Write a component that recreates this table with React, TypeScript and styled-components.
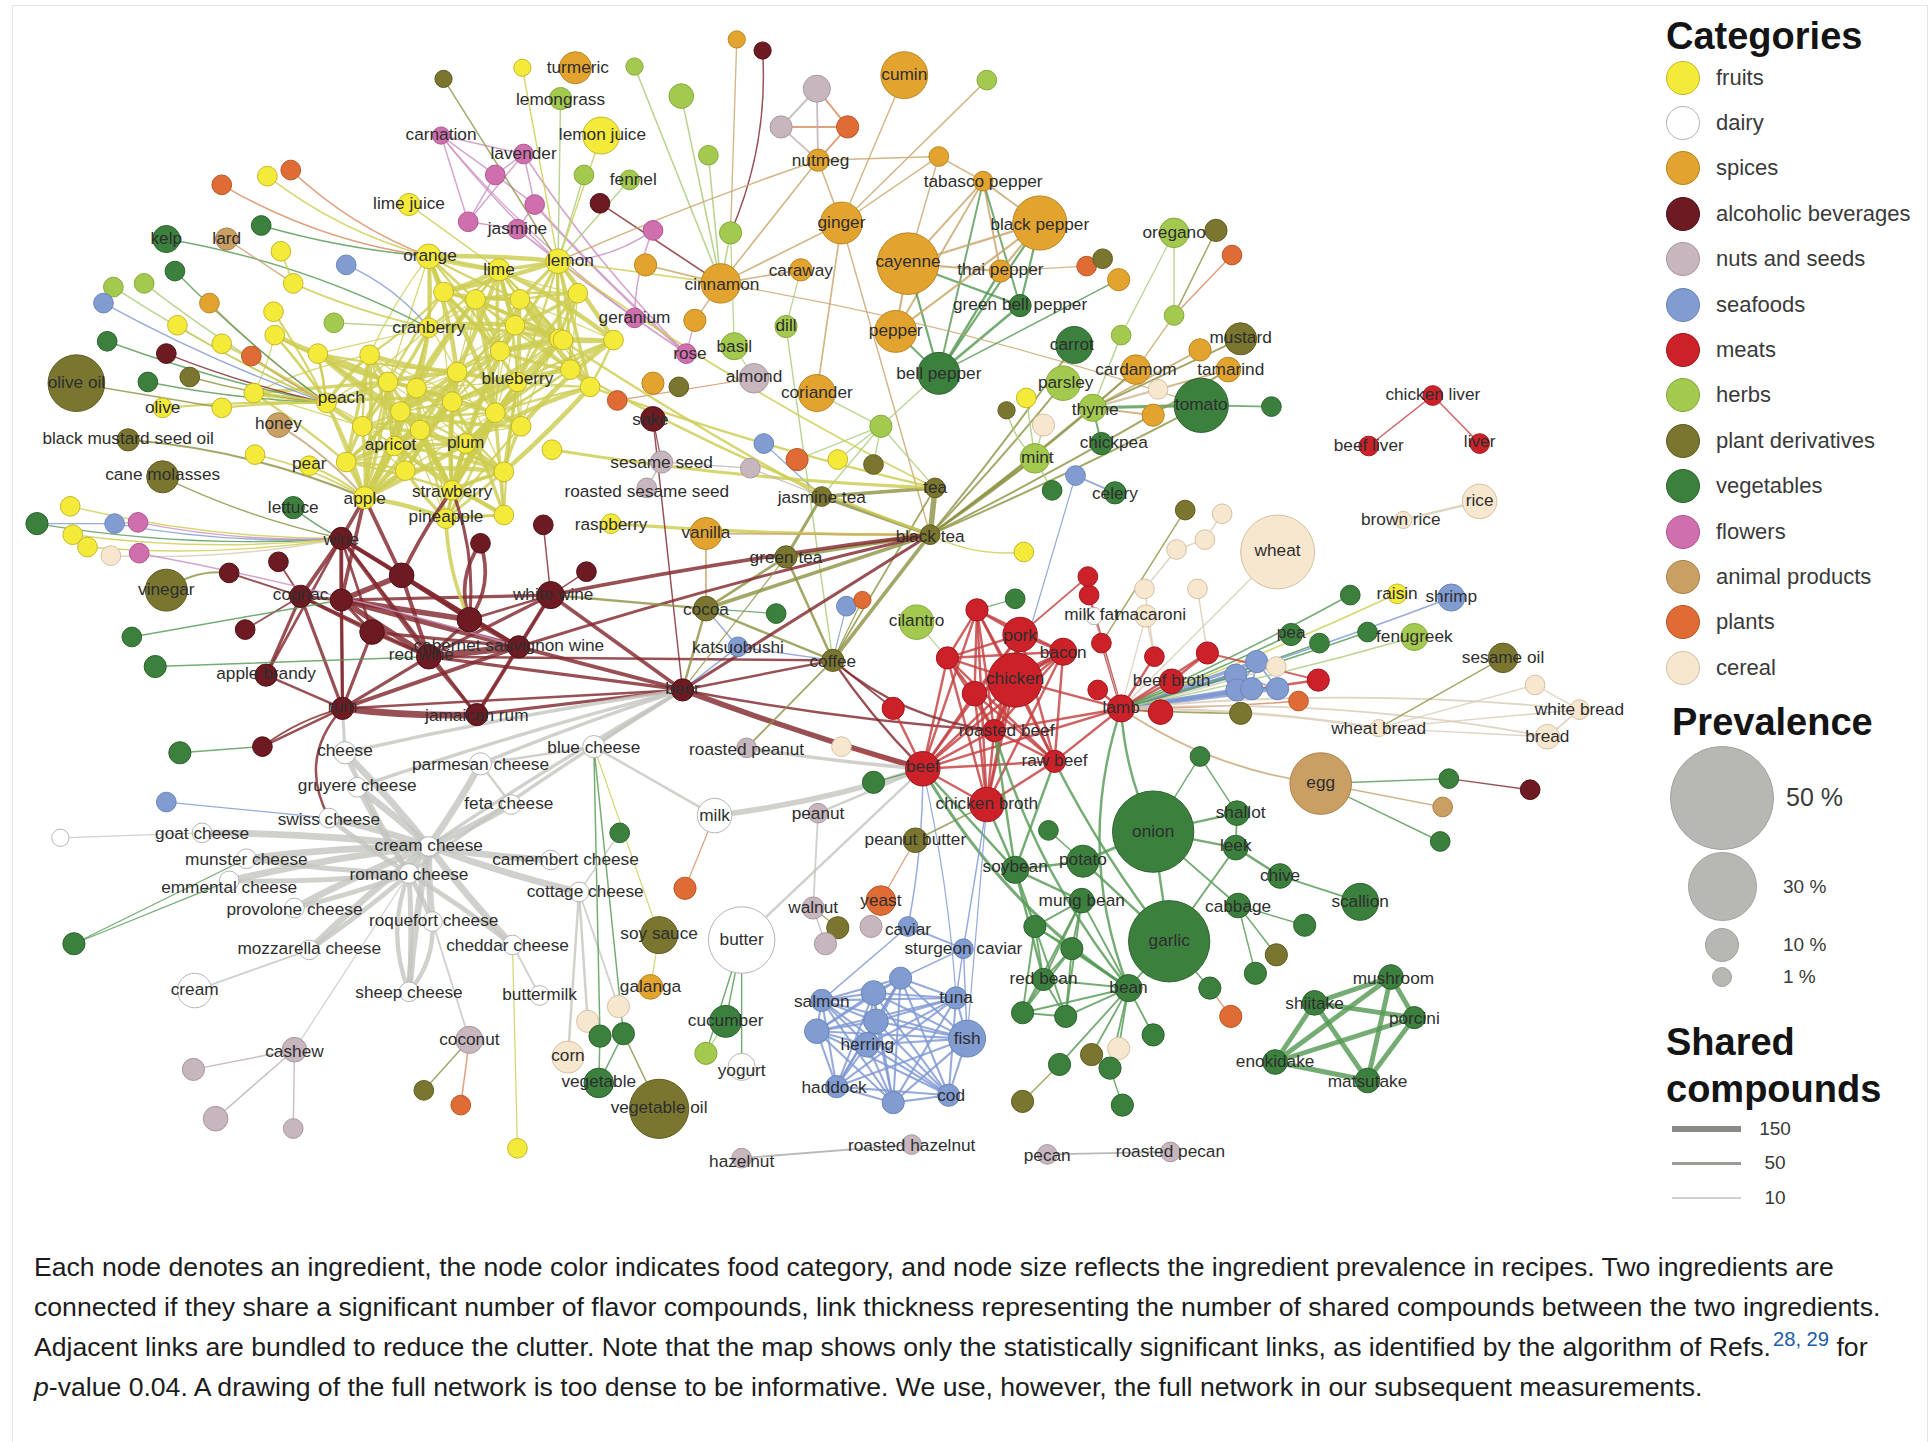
import React from "react";
import styled, { createGlobalStyle } from "styled-components";

const GlobalStyle = createGlobalStyle`
  html, body { margin: 0; padding: 0; background: #ffffff; }
  body { font-family: "Liberation Sans", Arial, Helvetica, sans-serif; }
`;

type Cat = "F" | "D" | "S" | "A" | "N" | "SF" | "M" | "H" | "P" | "V" | "FL" | "AP" | "PL" | "C";

const CATS: Record<Cat, { name: string; fill: string; stroke: string; edge: string }> = {
  F: { name: "fruits", fill: "#f4ea3a", stroke: "#c4b52c", edge: "#cdcd52" },
  D: { name: "dairy", fill: "#ffffff", stroke: "#b4b4b4", edge: "#c6c6c1" },
  S: { name: "spices", fill: "#e3a42f", stroke: "#b88420", edge: "#c9a66c" },
  A: { name: "alcoholic beverages", fill: "#6d1a22", stroke: "#4f1016", edge: "#832a30" },
  N: { name: "nuts and seeds", fill: "#c7b6be", stroke: "#a8969e", edge: "#bdb0b6" },
  SF: { name: "seafoods", fill: "#819cd1", stroke: "#6a84b8", edge: "#7f98d3" },
  M: { name: "meats", fill: "#cc2129", stroke: "#a0161c", edge: "#c4403f" },
  H: { name: "herbs", fill: "#a3ca4e", stroke: "#84a83a", edge: "#a9cc7a" },
  P: { name: "plant derivatives", fill: "#7a7630", stroke: "#5e5a22", edge: "#8f9445" },
  V: { name: "vegetables", fill: "#3c803e", stroke: "#2c622e", edge: "#569a55" },
  FL: { name: "flowers", fill: "#d06fae", stroke: "#b0558e", edge: "#cc90c2" },
  AP: { name: "animal products", fill: "#c99f64", stroke: "#a88048", edge: "#c8a474" },
  PL: { name: "plants", fill: "#df6b35", stroke: "#bb5526", edge: "#d98a60" },
  C: { name: "cereal", fill: "#f8e7cf", stroke: "#d2bfa4", edge: "#d9cbb6" },
};

const LEGEND_ORDER: Cat[] = ["F", "D", "S", "A", "N", "SF", "M", "H", "P", "V", "FL", "AP", "PL", "C"];

// id, x, y, r, category, label, label dx, label dy  (coordinates in the figure's own units)
type NodeT = [string, number, number, number, Cat, string?, number?, number?];

const NODES: NodeT[] = [
  // top left: fruits, flowers
  ["turmeric", 467, 55, 13, "S", "turmeric", 2, 4],
  ["y1", 424, 55, 7, "F"],
  ["p1", 360, 64, 7, "P"],
  ["h1", 515, 54, 7, "H"],
  ["lemongrass", 455, 80, 9, "H", "lemongrass", 0, 5],
  ["lemonjuice", 488, 110, 15, "F", "lemon juice", 1, 4],
  ["carnation", 358, 110, 7, "FL", "carnation", 0, 4],
  ["lavender", 425, 125, 8, "FL", "lavender", 0, 4],
  ["fl1", 402, 142, 8, "FL"],
  ["fl2", 434, 166, 8, "FL"],
  ["fl3", 380, 180, 8, "FL"],
  ["jasmine", 420, 186, 8, "FL", "jasmine", 0, 4],
  ["h2", 474, 142, 8, "H"],
  ["fennel", 511, 146, 8, "H", "fennel", 3, 4],
  ["a1", 487, 165, 8, "A"],
  ["pl1", 180, 150, 8, "PL"],
  ["y2", 217, 143, 8, "F"],
  ["pl2", 236, 138, 8, "PL"],
  ["limejuice", 332, 166, 9, "F", "lime juice", 0, 4],
  ["v1", 212, 183, 8, "V"],
  ["kelp", 135, 194, 11, "V", "kelp", 0, 4],
  ["lard", 184, 194, 9, "AP", "lard", 0, 4],
  ["y3", 228, 204, 8, "F"],
  ["sf1", 281, 215, 8, "SF"],
  ["orange", 348, 208, 10, "F", "orange", 1, 4],
  ["lime", 405, 219, 9, "F", "lime", 0, 4],
  ["lemon", 453, 212, 10, "F", "lemon", 10, 4],
  ["v2", 142, 220, 8, "V"],
  ["h3", 92, 233, 8, "H"],
  ["h4", 117, 230, 8, "H"],
  ["sf2", 84, 246, 8, "SF"],
  ["s1", 170, 246, 8, "S"],
  ["y4", 238, 230, 8, "F"],
  ["y5", 222, 253, 8, "F"],
  ["y6", 144, 264, 8, "F"],
  ["h5", 271, 262, 8, "H"],
  ["cranberry", 348, 266, 8, "F", "cranberry", 0, 4],
  ["y7", 360, 237, 8, "F"],
  ["y8", 386, 243, 8, "F"],
  ["y9", 422, 243, 8, "F"],
  ["y10", 418, 264, 8, "F"],
  ["y11", 454, 275, 8, "F"],
  ["v3", 87, 277, 8, "V"],
  ["y12", 223, 272, 8, "F"],
  ["y13", 180, 279, 8, "F"],
  ["pl3", 204, 289, 8, "PL"],
  ["y14", 258, 287, 8, "F"],
  ["y15", 300, 288, 8, "F"],
  ["y16", 406, 285, 8, "F"],
  ["a2", 135, 287, 8, "A"],
  ["y17", 371, 302, 8, "F"],
  ["y18", 315, 310, 8, "F"],
  ["y19", 338, 315, 8, "F"],
  ["oliveoil", 62, 311, 23, "P", "olive oil", 0, 4],
  ["v4", 120, 310, 8, "V"],
  ["p2", 154, 306, 8, "P"],
  ["y20", 206, 319, 8, "F"],
  ["peach", 265, 327, 8, "F", "peach", 12, 0],
  ["blueberry", 420, 310, 8, "F", "blueberry", 0, 2],
  ["y21", 367, 326, 8, "F"],
  ["olive", 132, 331, 8, "F", "olive", 0, 4],
  ["y22", 180, 331, 8, "F"],
  ["y23", 325, 334, 8, "F"],
  ["y24", 402, 335, 8, "F"],
  ["honey", 226, 345, 10, "AP", "honey", 0, 3],
  ["bmso", 104, 357, 9, "P", "black mustard seed oil", 0, 3],
  ["apricot", 320, 362, 8, "F", "apricot", -3, 3],
  ["plum", 378, 360, 8, "F", "plum", 0, 4],
  ["y25", 207, 369, 8, "F"],
  ["pear", 251, 378, 8, "F", "pear", 0, 3],
  ["y26", 281, 375, 8, "F"],
  ["y27", 329, 382, 8, "F"],
  ["y28", 409, 383, 8, "F"],
  ["y29", 341, 349, 8, "F"],
  ["y30", 294, 346, 8, "F"],
  ["y31", 423, 346, 8, "F"],
  ["canemol", 132, 387, 13, "P", "cane molasses", 0, 3],
  ["apple", 296, 404, 9, "F", "apple", 0, 5],
  ["strawberry", 367, 398, 8, "F", "strawberry", 0, 5],
  ["lettuce", 238, 412, 9, "V", "lettuce", 0, 4],
  ["pineapple", 362, 421, 8, "F", "pineapple", 0, 3],
  ["y32", 409, 418, 8, "F"],
  ["a3", 441, 426, 8, "A"],
  ["y33", 57, 411, 8, "F"],
  ["v5", 30, 425, 9, "V"],
  ["sf3", 93, 425, 8, "SF"],
  ["fl4", 112, 424, 8, "FL"],
  ["y34", 59, 434, 8, "F"],
  ["y35", 71, 444, 8, "F"],
  ["c1", 90, 451, 8, "C"],
  ["fl5", 113, 449, 8, "FL"],
  // alcoholic beverages
  ["wine", 277, 437, 9, "A", "wine", 0, 5],
  ["a4", 390, 441, 8, "A"],
  ["a5", 226, 456, 8, "A"],
  ["a6", 326, 467, 10, "A"],
  ["a7", 186, 465, 8, "A"],
  ["vinegar", 135, 479, 17, "P", "vinegar", 0, 4],
  ["cognac", 244, 484, 9, "A", "cognac", 0, 3],
  ["a8", 277, 487, 9, "A"],
  ["whitewine", 447, 483, 11, "A", "white wine", 2, 4],
  ["a9", 199, 511, 8, "A"],
  ["a10", 302, 513, 10, "A"],
  ["a11", 381, 503, 10, "A"],
  ["v6", 107, 517, 8, "V"],
  ["redwine", 348, 533, 10, "A", "red wine", -6, 3],
  ["cabernet", 421, 525, 9, "A", "cabernet sauvignon wine", -8, 3],
  ["v7", 126, 541, 9, "V"],
  ["applebrandy", 216, 548, 9, "A", "apple brandy", 0, 3],
  ["rum", 278, 575, 9, "A", "rum", 0, 3],
  ["jamaicanrum", 387, 580, 9, "A", "jamaican rum", 0, 5],
  ["v8", 146, 611, 9, "V"],
  ["a12", 213, 606, 8, "A"],
  // dairy
  ["cheese", 280, 611, 9, "D", "cheese", 0, 3],
  ["parmesan", 390, 620, 9, "D", "parmesan cheese", 0, 5],
  ["gruyere", 290, 639, 8, "D", "gruyere cheese", 0, 3],
  ["sf4", 135, 651, 8, "SF"],
  ["feta", 415, 653, 8, "D", "feta cheese", -2, 4],
  ["swiss", 267, 664, 8, "D", "swiss cheese", 0, 6],
  ["d1", 49, 680, 7, "D"],
  ["goat", 164, 676, 8, "D", "goat cheese", 0, 5],
  ["munster", 200, 697, 8, "D", "munster cheese", 0, 5],
  ["creamcheese", 348, 687, 8, "D", "cream cheese", 0, 4],
  ["romano", 332, 709, 8, "D", "romano cheese", 0, 5],
  ["emmental", 186, 715, 8, "D", "emmental cheese", 0, 10],
  ["provolone", 239, 737, 8, "D", "provolone cheese", 0, 6],
  ["roquefort", 351, 748, 8, "D", "roquefort cheese", 1, 4],
  ["v9", 60, 766, 9, "V"],
  ["mozzarella", 251, 771, 8, "D", "mozzarella cheese", 0, 3],
  ["cheddar", 416, 767, 8, "D", "cheddar cheese", -4, 5],
  ["cream", 158, 804, 14, "D", "cream", 0, 4],
  ["sheep", 332, 805, 8, "D", "sheep cheese", 0, 5],
  ["buttermilk", 438, 808, 8, "D", "buttermilk", 0, 4],
  ["camembert", 447, 698, 8, "D", "camembert cheese", 12, 4],
  ["cottage", 470, 724, 8, "D", "cottage cheese", 5, 4],
  ["bluecheese", 482, 606, 9, "D", "blue cheese", 0, 5],
  ["coconut", 381, 844, 11, "N", "coconut", 0, 4],
  ["cashew", 239, 852, 10, "N", "cashew", 0, 6],
  ["n1", 157, 868, 9, "N"],
  ["p3", 344, 885, 8, "P"],
  ["pl4", 374, 897, 8, "PL"],
  ["n2", 175, 908, 10, "N"],
  ["n3", 238, 916, 8, "N"],
  ["y36", 420, 932, 8, "F"],
  // spices, herbs (top center)
  ["s2", 598, 32, 7, "S"],
  ["a13", 619, 41, 7, "A"],
  ["h6", 553, 78, 10, "H"],
  ["cumin", 734, 61, 19, "S", "cumin", 0, 4],
  ["h7", 801, 65, 8, "H"],
  ["n4", 663, 72, 11, "N"],
  ["n5", 634, 103, 9, "N"],
  ["pl5", 688, 103, 9, "PL"],
  ["nutmeg", 664, 130, 9, "S", "nutmeg", 2, 5],
  ["s3", 762, 127, 8, "S"],
  ["h8", 575, 126, 8, "H"],
  ["tabasco", 798, 147, 8, "S", "tabasco pepper", 0, 5],
  ["blackpepper", 844, 181, 22, "S", "black pepper", 0, 6],
  ["ginger", 683, 181, 17, "S", "ginger", 0, 4],
  ["h9", 593, 189, 9, "H"],
  ["fl6", 530, 187, 8, "FL"],
  ["s4", 524, 215, 9, "S"],
  ["cinnamon", 585, 230, 16, "S", "cinnamon", 1, 5],
  ["caraway", 650, 219, 9, "S", "caraway", 0, 5],
  ["cayenne", 737, 214, 25, "S", "cayenne", 0, 3],
  ["thaipepper", 812, 220, 9, "S", "thai pepper", 0, 3],
  ["pl6", 882, 216, 8, "PL"],
  ["y37", 469, 238, 8, "F"],
  ["greenbell", 828, 248, 9, "V", "green bell pepper", 0, 4],
  ["s5", 564, 260, 9, "S"],
  ["geranium", 515, 258, 8, "FL", "geranium", 0, 4],
  ["dill", 638, 265, 9, "H", "dill", 0, 4],
  ["pepper", 727, 269, 17, "S", "pepper", 0, 4],
  ["y38", 457, 276, 8, "F"],
  ["y39", 498, 276, 8, "F"],
  ["carrot", 872, 280, 15, "V", "carrot", -2, 4],
  ["rose", 557, 287, 8, "FL", "rose", 3, 4],
  ["basil", 596, 281, 11, "H", "basil", 0, 5],
  ["y40", 463, 300, 8, "F"],
  ["y41", 479, 314, 8, "F"],
  ["bellpepper", 762, 303, 17, "V", "bell pepper", 0, 5],
  ["almond", 612, 307, 12, "N", "almond", 0, 3],
  ["s6", 530, 311, 9, "S"],
  ["p4", 551, 314, 8, "P"],
  ["pl7", 501, 325, 8, "PL"],
  ["sake", 530, 340, 10, "A", "sake", -2, 5],
  ["coriander", 663, 319, 15, "S", "coriander", 0, 4],
  ["parsley", 863, 311, 14, "H", "parsley", 2, 4],
  ["y42", 833, 323, 8, "F"],
  ["p5", 817, 333, 7, "P"],
  // top right
  ["oregano", 953, 189, 12, "H", "oregano", 0, 4],
  ["p6", 987, 187, 9, "P"],
  ["pl8", 1000, 207, 8, "PL"],
  ["p7", 895, 210, 8, "P"],
  ["s7", 908, 227, 9, "S"],
  ["h10", 953, 256, 8, "H"],
  ["h11", 910, 272, 8, "H"],
  ["mustard", 1007, 275, 13, "P", "mustard", 0, 3],
  ["s8", 974, 284, 9, "S"],
  ["cardamom", 922, 300, 12, "S", "cardamom", 0, 4],
  ["tamarind", 997, 300, 10, "S", "tamarind", 2, 4],
  ["c2", 940, 316, 8, "C"],
  ["tomato", 975, 329, 22, "V", "tomato", 0, 4],
  ["v10", 1032, 330, 8, "V"],
  ["chickenliver", 1163, 321, 8, "M", "chicken liver", 0, 4],
  ["thyme", 887, 331, 11, "H", "thyme", 2, 6],
  ["s9", 936, 337, 9, "S"],
  ["c14", 847, 345, 9, "C"],
  ["mint", 840, 372, 12, "H", "mint", 2, 4],
  ["chickpea", 894, 360, 9, "V", "chickpea", 10, 4],
  ["beefliver", 1111, 362, 8, "M", "beef liver", 0, 4],
  ["liver", 1201, 360, 8, "M", "liver", 0, 3],
  ["sf5", 873, 386, 8, "SF"],
  ["v35", 854, 398, 8, "V"],
  ["celery", 905, 400, 9, "V", "celery", 0, 5],
  ["rice", 1201, 407, 14, "C", "rice", 0, 4],
  ["brownrice", 1139, 422, 7, "C", "brown rice", -2, 4],
  ["p8", 962, 414, 8, "P"],
  ["c3", 992, 417, 8, "C"],
  ["c4", 978, 438, 8, "C"],
  ["c5", 955, 446, 8, "C"],
  ["wheat", 1037, 448, 30, "C", "wheat", 0, 3],
  ["c6", 929, 478, 8, "C"],
  ["c7", 972, 478, 8, "C"],
  ["m1", 884, 483, 8, "M"],
  ["v11", 1096, 483, 8, "V"],
  ["raisin", 1134, 482, 8, "F", "raisin", 0, 4],
  ["shrimp", 1178, 485, 11, "SF", "shrimp", 0, 4],
  ["milkfat", 888, 500, 7, "D", "milk fat", -2, 3],
  ["macaroni", 930, 500, 9, "C", "macaroni", 4, 3],
  ["pea", 1048, 515, 9, "V", "pea", 0, 3],
  ["v12", 1071, 522, 8, "V"],
  ["v13", 1110, 513, 8, "V"],
  ["fenugreek", 1148, 517, 11, "H", "fenugreek", 0, 4],
  ["m2", 894, 522, 8, "M"],
  ["m3", 937, 533, 8, "M"],
  ["m4", 980, 530, 9, "M"],
  ["sf6", 1020, 537, 9, "SF"],
  ["c8", 1036, 541, 8, "C"],
  ["sesameoil", 1220, 534, 12, "P", "sesame oil", 0, 4],
  ["sf7", 1003, 548, 9, "SF"],
  ["sf8", 1004, 560, 9, "SF"],
  ["sf9", 1016, 559, 9, "SF"],
  ["sf10", 1037, 559, 9, "SF"],
  ["m5", 1070, 552, 9, "M"],
  ["m6", 891, 560, 8, "M"],
  ["beefbroth", 951, 553, 10, "M", "beef broth", 0, 4],
  ["c9", 1246, 556, 8, "C"],
  ["pl10", 1054, 569, 8, "PL"],
  ["lamb", 910, 575, 11, "M", "lamb", 0, 4],
  ["m7", 942, 578, 10, "M"],
  ["p9", 1007, 579, 9, "P"],
  ["whitebread", 1282, 576, 8, "C", "white bread", 0, 4],
  ["wheatbread", 1119, 591, 7, "C", "wheat bread", 0, 5],
  ["bread", 1256, 598, 10, "C", "bread", 0, 4],
  ["egg", 1072, 636, 25, "AP", "egg", 0, 4],
  ["v14", 974, 614, 8, "V"],
  ["v15", 1176, 632, 8, "V"],
  ["a14", 1242, 641, 8, "A"],
  ["ap1", 1171, 655, 8, "AP"],
  ["v16", 1169, 683, 8, "V"],
  ["shallot", 1004, 660, 10, "V", "shallot", 3, 4],
  ["onion", 936, 675, 33, "V", "onion", 0, 4],
  // center
  ["n6", 537, 375, 9, "N", "sesame seed", 0, 5],
  ["n7", 609, 380, 8, "N"],
  ["n8", 525, 396, 8, "N", "roasted sesame seed", 0, 7],
  ["y43", 448, 365, 8, "F"],
  ["sf11", 620, 360, 8, "SF"],
  ["pl12", 647, 373, 9, "PL"],
  ["y44", 680, 373, 8, "F"],
  ["p10", 709, 377, 8, "P"],
  ["h12", 715, 346, 9, "H"],
  ["tea", 759, 396, 8, "P", "tea", 0, 4],
  ["jasminetea", 667, 403, 8, "P", "jasmine tea", 0, 5],
  ["raspberry", 496, 425, 8, "F", "raspberry", 0, 5],
  ["vanilla", 573, 433, 13, "S", "vanilla", 0, 4],
  ["blacktea", 755, 434, 8, "P", "black tea", 0, 6],
  ["y45", 831, 448, 8, "F"],
  ["greentea", 638, 452, 9, "P", "green tea", 0, 5],
  ["a16", 476, 464, 8, "A"],
  ["cocoa", 573, 494, 10, "P", "cocoa", 0, 5],
  ["sf12", 687, 492, 8, "SF"],
  ["pl13", 700, 487, 7, "PL"],
  ["v17", 630, 498, 8, "V"],
  ["cilantro", 744, 505, 14, "H", "cilantro", 0, 3],
  ["v18", 824, 486, 8, "V"],
  ["m8", 793, 495, 9, "M"],
  ["katsuobushi", 599, 525, 8, "SF", "katsuobushi", 0, 5],
  ["coffee", 676, 536, 9, "P", "coffee", 0, 5],
  ["beer", 554, 560, 9, "A", "beer", 0, 3],
  ["pork", 828, 515, 14, "M", "pork", 0, 5],
  ["bacon", 863, 529, 11, "M", "bacon", 0, 5],
  ["chicken", 824, 552, 22, "M", "chicken", 0, 3],
  ["m9", 769, 534, 9, "M"],
  ["m10", 791, 563, 10, "M"],
  ["m11", 883, 468, 8, "M"],
  ["m12", 725, 575, 9, "M"],
  ["roastedbeef", 807, 593, 9, "M", "roasted beef", 10, 4],
  ["c10", 683, 606, 8, "C"],
  ["roastedpeanut", 606, 607, 8, "N", "roasted peanut", 0, 6],
  ["beef", 749, 624, 14, "M", "beef", 0, 3],
  ["rawbeef", 856, 618, 9, "M", "raw beef", 0, 4],
  ["v19", 709, 635, 9, "V"],
  ["chickenbroth", 801, 653, 14, "M", "chicken broth", 0, 4],
  ["milk", 580, 662, 14, "D", "milk", 0, 4],
  ["peanut", 664, 660, 8, "N", "peanut", 0, 5],
  ["v20", 503, 676, 8, "V"],
  ["v21", 851, 674, 8, "V"],
  // bottom center
  ["peanutbutter", 743, 682, 10, "P", "peanut butter", 0, 4],
  ["pl14", 556, 721, 9, "PL"],
  ["soybean", 824, 706, 11, "V", "soybean", 0, 2],
  ["potato", 879, 699, 13, "V", "potato", 0, 3],
  ["walnut", 660, 737, 9, "N", "walnut", 0, 4],
  ["yeast", 715, 731, 12, "PL", "yeast", 0, 4],
  ["n9", 707, 752, 9, "N"],
  ["p11", 680, 753, 9, "P"],
  ["n10", 670, 766, 9, "N"],
  ["mungbean", 878, 731, 10, "V", "mung bean", 0, 4],
  ["soysauce", 535, 759, 15, "P", "soy sauce", 0, 3],
  ["butter", 602, 763, 27, "D", "butter", 0, 4],
  ["caviar", 737, 752, 8, "SF", "caviar", 0, 7],
  ["sturgeon", 782, 770, 8, "SF", "sturgeon caviar", 0, 4],
  ["v22", 840, 752, 9, "V"],
  ["v23", 870, 770, 9, "V"],
  ["redbean", 847, 795, 9, "V", "red bean", 0, 4],
  ["galanga", 528, 801, 10, "S", "galanga", 0, 4],
  ["c11", 502, 817, 9, "C"],
  ["c12", 477, 829, 9, "C"],
  ["salmon", 667, 812, 9, "SF", "salmon", 0, 5],
  ["sf13", 731, 794, 9, "SF"],
  ["sf14", 709, 806, 10, "SF"],
  ["tuna", 776, 810, 9, "SF", "tuna", 0, 4],
  ["cucumber", 589, 829, 13, "V", "cucumber", 0, 4],
  ["sf15", 711, 829, 10, "SF"],
  ["sf16", 663, 837, 10, "SF"],
  ["fish", 785, 843, 15, "SF", "fish", 0, 4],
  ["v24", 487, 841, 9, "V"],
  ["v25", 506, 839, 9, "V"],
  ["herring", 704, 848, 10, "SF", "herring", 0, 4],
  ["h13", 573, 855, 9, "H"],
  ["corn", 461, 858, 13, "C", "corn", 0, 3],
  ["yogurt", 602, 866, 11, "D", "yogurt", 0, 7],
  ["v26", 830, 822, 9, "V"],
  ["v27", 865, 825, 9, "V"],
  ["v28", 860, 864, 9, "V"],
  ["p12", 886, 856, 9, "P"],
  ["vegetable", 486, 879, 12, "V", "vegetable", 0, 3],
  ["haddock", 679, 882, 9, "SF", "haddock", -2, 5],
  ["sf17", 725, 895, 9, "SF"],
  ["cod", 770, 889, 9, "SF", "cod", 2, 5],
  ["p13", 830, 894, 9, "P"],
  ["vegoil", 535, 900, 24, "P", "vegetable oil", 0, 3],
  ["hazelnut", 602, 940, 8, "N", "hazelnut", 0, 7],
  ["roastedhazelnut", 740, 929, 8, "N", "roasted hazelnut", 0, 5],
  ["pecan", 850, 937, 8, "N", "pecan", 0, 5],
  // bottom right
  ["leek", 1003, 688, 10, "V", "leek", 0, 3],
  ["chive", 1039, 711, 10, "V", "chive", 0, 4],
  ["scallion", 1104, 732, 15, "V", "scallion", 0, 4],
  ["cabbage", 1005, 735, 10, "V", "cabbage", 0, 5],
  ["v29", 1059, 751, 9, "V"],
  ["garlic", 949, 764, 33, "V", "garlic", 0, 4],
  ["p14", 1036, 775, 9, "P"],
  ["v30", 1019, 790, 9, "V"],
  ["mushroom", 1129, 793, 10, "V", "mushroom", 2, 6],
  ["bean", 916, 802, 11, "V", "bean", 0, 4],
  ["v31", 982, 802, 9, "V"],
  ["shiitake", 1067, 814, 10, "V", "shiitake", 0, 5],
  ["porcini", 1148, 826, 9, "V", "porcini", 0, 5],
  ["pl15", 999, 825, 9, "PL"],
  ["v32", 936, 840, 9, "V"],
  ["c13", 908, 851, 9, "C"],
  ["v33", 901, 867, 9, "V"],
  ["enokidake", 1035, 862, 10, "V", "enokidake", 0, 4],
  ["matsutake", 1110, 877, 10, "V", "matsutake", 0, 5],
  ["v34", 911, 897, 9, "V"],
  ["roastedpecan", 950, 935, 8, "N", "roasted pecan", 0, 4],
];

type NodeInfo = { id: string; x: number; y: number; r: number; cat: Cat; label?: string; dx: number; dy: number };
const byId: Record<string, NodeInfo> = {};
NODES.forEach(([id, x, y, r, cat, label, dx, dy]) => {
  byId[id] = { id, x, y, r, cat, label, dx: dx ?? 0, dy: dy ?? 4 };
});

type EdgeT = { a: string; b: string; w: number; bend: number; color?: string };
const EDGES: EdgeT[] = [];
const link = (a: string, b: string, w = 1.2, bend = 0, color?: string) => {
  EDGES.push({ a, b, w, bend, color });
};
const star = (hub: string, list: string, w = 1.2, bend = 0, color?: string) =>
  list.split(" ").forEach((b) => link(hub, b, w, bend, color));
const mesh = (list: string, w = 1.5, color?: string) => {
  const ids = list.split(" ");
  ids.forEach((a, i) => ids.slice(i + 1).forEach((b) => link(a, b, w, 0, color)));
};
const autoMesh = (list: string, maxD: number, keep: number, wBase: number, wVar: number) => {
  const ids = list.split(" ");
  ids.forEach((a, i) =>
    ids.forEach((b, j) => {
      if (j <= i) return;
      const A = byId[a];
      const B = byId[b];
      if (!A || !B) return;
      const d = Math.hypot(A.x - B.x, A.y - B.y);
      const h = (i * 73 + j * 151) % 97;
      if (d < maxD && h % 10 < keep) link(a, b, wBase + (h % 4) * wVar, ((h % 5) - 2) * 0.03);
    })
  );
};

const RED = CATS.A.edge;
const GRAY = CATS.D.edge;
const GREEN = CATS.V.edge;
const BLUE = CATS.SF.edge;
const TAN = CATS.S.edge;
const OLIVE = CATS.P.edge;

// fruit cluster
autoMesh(
  "orange lime lemon cranberry y7 y8 y9 y10 y11 y16 y17 y18 y19 y21 y23 y24 y29 y30 y31 apricot plum y26 y27 y28 peach blueberry apple strawberry pineapple y32 y37 y38 y39 y40 y41 y14 y15 y12 y20",
  115, 6, 1, 0.9
);
star("apple", "y18 y19 y27 y23 y26 apricot y30 y15 peach", 3, 0.05);
star("strawberry", "y17 y21 plum y24 y28 blueberry y16 y29 y10", 3, -0.05);
star("orange", "y7 y8 cranberry lime", 2.2);
star("lime", "y8 y9 y10 lemon", 2.2);
star("pineapple", "y32 y28 plum", 2.2);
link("lime", "limejuice", 1.2);

// flowers
mesh("carnation lavender fl1 fl3", 1.2);
link("fl1", "fl2", 1.2);
link("fl3", "jasmine", 1.2);
link("fl2", "jasmine", 1.2);
link("lavender", "fl2", 1.2);
link("carnation", "geranium", 1, 0.06);
link("carnation", "lemon", 1.2, 0.04, CATS.FL.edge);
link("lavender", "rose", 1.3, 0.05);
link("fl2", "rose", 2, 0.03);
link("jasmine", "rose", 1.5, 0.02);
link("geranium", "fl6", 1.2, -0.1);
link("lemon", "fl6", 1.2, 0.15);

// top spices and herbs
star("lemon", "lemongrass y1 p1 h2 lemonjuice fennel", 1.2);
star("cinnamon", "h6 h8 h1 a1 s4 h9 s5 caraway nutmeg ginger lemon", 1.3);
link("h9", "a13", 1.2, 0.12);
link("h9", "s2", 1.1);
mesh("n4 n5 pl5", 1.6);
star("nutmeg", "n4 n5 pl5", 1.5);
star("nutmeg", "ginger s3", 1.3);
link("nutmeg", "lemon", 1.3, 0.02, TAN);
star("s3", "ginger cayenne tabasco", 1.2);
link("cumin", "ginger", 1.2);
link("h7", "ginger", 1.2);
star("tabasco", "blackpepper thaipepper cayenne pepper bellpepper greenbell", 1.6);
star("cayenne", "blackpepper thaipepper pepper greenbell bellpepper", 1.8);
star("blackpepper", "thaipepper pepper greenbell bellpepper", 1.8);
link("thaipepper", "bellpepper", 2, 0, GREEN);
link("greenbell", "bellpepper", 2.2, 0, GREEN);
link("pepper", "bellpepper", 1.6);
link("pl6", "thaipepper", 1);
link("ginger", "coriander", 1.4);
link("ginger", "blacktea", 1.2, 0, TAN);
link("caraway", "dill", 1);
link("dill", "coffee", 1.2, 0, CATS.H.edge);
link("basil", "almond", 1, 0, CATS.H.edge);
link("basil", "h9", 1);
link("cinnamon", "tomato", 1, -0.04, TAN);
link("s5", "rose", 1);
link("almond", "pl7", 1);

// top right herbs / spices
star("h10", "oregano p6 pl8 cardamom", 1.2);
link("h11", "oregano", 1);
link("h11", "thyme", 1.2);
link("p7", "pl6", 1);
link("s7", "bellpepper", 1.2);
star("thyme", "s8 mustard tamarind cardamom c2 s9 chickpea", 1.6);
link("thyme", "tomato", 2.5, 0, GREEN);
link("tomato", "v10", 1.5);
link("rice", "brownrice", 2);
link("chickenliver", "beefliver", 1.2);
link("chickenliver", "liver", 1.2);

// teas and plant derivatives
link("blacktea", "tea", 4.5);
star("blacktea", "jasminetea greentea coffee cocoa", 3);
star("blacktea", "thyme mint parsley tomato cardamom carrot tamarind", 1.6, 0.02, OLIVE);
link("blacktea", "y45", 1.2, 0.15, CATS.F.edge);
link("tea", "jasminetea", 3);
link("jasminetea", "greentea", 2.5);
link("greentea", "coffee", 2);
link("cocoa", "coffee", 2);
link("greentea", "cocoa", 2.2);
link("coffee", "tea", 1.5);
star("h12", "jasminetea tea p10 y44 pl12 coriander bellpepper", 1.1, 0, CATS.H.edge);
link("sf11", "jasminetea", 1, 0, BLUE);
link("p5", "mint", 1.2, 0.15);
link("y42", "mint", 1.2);
link("c14", "mint", 1.2);
link("v35", "mint", 1.2);
link("mint", "blacktea", 1.6, 0, OLIVE);
link("sf5", "chicken", 1, 0, BLUE);
link("celery", "sf5", 1.5);
link("y43", "tea", 2.5, 0.03, CATS.F.edge);
link("raspberry", "blacktea", 2.5, 0.02, CATS.F.edge);
link("y11", "jasminetea", 2, 0.02, CATS.F.edge);
link("y41", "tea", 2, 0.03, CATS.F.edge);
link("y40", "blacktea", 2, 0.04, CATS.F.edge);
link("lemon", "tea", 1.5, 0.04, CATS.F.edge);
link("sake", "n6", 1, 0, RED);
link("n6", "n8", 1.2);
link("n6", "n7", 1);
link("n7", "jasminetea", 1, 0, CATS.N.edge);
link("sake", "beer", 1.2, 0, RED);
link("vanilla", "cocoa", 1.5, 0, TAN);
link("vanilla", "blacktea", 1.5, 0, TAN);
link("a16", "whitewine", 1.2);
star("katsuobushi", "cocoa coffee beer", 1.2, 0, BLUE);
link("sf12", "coffee", 1, 0, BLUE);
link("pl13", "coffee", 1);
link("v17", "cocoa", 1, 0, GREEN);
link("cilantro", "m9", 1, 0, CATS.H.edge);
link("v18", "m8", 1, 0, GREEN);

// alcoholic beverages
star("wine", "cognac a8 redwine cabernet a6", 3.2);
star("wine", "rum applebrandy a10 jamaicanrum a11", 2.2);
star("cognac", "a8 rum redwine applebrandy a10", 2.6);
star("cognac", "a7 a5 a9", 1.5);
star("a8", "a6 redwine cabernet a11", 4.5);
star("a8", "whitewine a10 rum", 2.6);
star("a6", "a11 cabernet redwine", 3.2);
star("a10", "redwine rum cabernet", 2.6);
link("redwine", "cabernet", 5.5);
star("redwine", "rum jamaicanrum a11 whitewine beer", 2.6);
star("cabernet", "whitewine a11 jamaicanrum beer rum", 3.2);
link("a11", "a4", 3, 0.25);
link("a11", "a4", 3, -0.25);
link("a11", "whitewine", 2);
link("rum", "jamaicanrum", 5.5, 0.04);
star("rum", "applebrandy beer a12", 2);
link("jamaicanrum", "beer", 2.5);
link("jamaicanrum", "whitewine", 2);
link("whitewine", "beer", 3);
link("whitewine", "blacktea", 3, -0.02, RED);
link("cabernet", "blacktea", 2.5, -0.02, RED);
link("whitewine", "cocoa", 2, 0, OLIVE);
link("redwine", "coffee", 2, 0, RED);
link("a3", "whitewine", 1.2);
star("apple", "wine a8 a6", 3, 0, RED);
link("strawberry", "a6", 3, 0.05, RED);
link("pineapple", "a11", 3, 0.1, CATS.F.edge);
link("strawberry", "a11", 2.5, -0.12, RED);
link("beer", "beef", 4.5, 0.02, RED);
link("beer", "roastedbeef", 2, 0.03, RED);
link("beer", "coffee", 2, 0, RED);
link("beer", "blacktea", 2.5, 0, RED);
link("beer", "cocoa", 2, 0);
link("beer", "greentea", 1);
link("a7", "vinegar", 1.5, 0.2);
link("a8", "v6", 1.2, 0, GREEN);
link("redwine", "v7", 1.2, 0, GREEN);
link("a12", "v8", 1.2, 0, GREEN);
link("rum", "a12", 1.5, 0.1);
link("rum", "cheese", 2.5);
link("rum", "swiss", 2, 0.35, RED);

// left periphery into the fruit cluster
star("orange", "pl1 y2 pl2", 1.3, -0.1);
link("orange", "v1", 1.2, -0.05);
link("cranberry", "kelp", 1.2, 0.08);
link("cranberry", "sf1", 1.2, 0.12);
link("cranberry", "h5", 1.2);
link("y4", "lard", 1.2);
link("y4", "y3", 1.3);
link("y4", "cranberry", 1.5, 0.05);
star("peach", "h3 h4 sf2 y6 v3 a2 v4 p2 s1 pl3 v2", 1.2, -0.04);
star("peach", "y20 y13 y14 olive y22 y12 y5", 1.8, 0.03);
link("y22", "oliveoil", 1.2);
star("apple", "honey bmso y25 pear", 1.6, 0.08);
star("wine", "canemol lettuce y33 v5 sf3 fl4 y34 y35 c1", 1.2, -0.06);
link("cabernet", "fl5", 1.2, 0.03);
link("v5", "sf3", 1.2);
link("sf3", "fl4", 1.2);

// dairy
star("creamcheese", "cheese parmesan gruyere feta swiss goat munster romano emmental provolone roquefort mozzarella cheddar sheep camembert cottage", 5.5, 0.03);
star("romano", "cheese gruyere swiss munster emmental provolone roquefort mozzarella sheep cheddar", 4, -0.03);
star("beer", "cheese parmesan creamcheese bluecheese romano gruyere", 2.8, 0.02, GRAY);
link("bluecheese", "parmesan", 2);
link("bluecheese", "milk", 2);
link("milk", "beef", 4.5, 0.05, GRAY);
link("feta", "parmesan", 2);
link("goat", "d1", 1);
link("swiss", "sf4", 1, 0, BLUE);
link("munster", "v9", 1, 0, GREEN);
link("emmental", "v9", 1, 0, GREEN);
link("mozzarella", "cream", 1.5);
link("romano", "cashew", 1, 0, GRAY);
link("roquefort", "coconut", 1.5, 0, GRAY);
link("cheddar", "y36", 1, 0, CATS.F.edge);
link("cheddar", "buttermilk", 1.5);
link("sheep", "roquefort", 3.5, 0.2, GRAY);
link("sheep", "romano", 3.5, -0.2, GRAY);
star("cashew", "n1 n2 n3", 1.2);
star("coconut", "p3 pl4", 1.2);
link("cottage", "corn", 2, 0, GRAY);
link("cottage", "c12", 2, 0, GRAY);
link("cottage", "c11", 1.5, 0, GRAY);
link("bluecheese", "v24", 1.2, 0, GREEN);
link("bluecheese", "v25", 1.2, 0, GREEN);
link("bluecheese", "soysauce", 1, 0, CATS.F.edge);
link("soysauce", "galanga", 1, 0, CATS.F.edge);
link("v25", "vegoil", 1.2);
link("v25", "vegetable", 1.2);
link("v24", "vegetable", 1.2);
star("butter", "cucumber h13 yogurt", 1.2, 0, GREEN);
link("butter", "beef", 2, 0, GRAY);
link("cucumber", "h13", 1);
link("milk", "pl14", 1, 0, CATS.PL.edge);
link("v20", "cottage", 1.2, 0, GRAY);
link("roastedpeanut", "beef", 3, 0.02, GRAY);
link("roastedpeanut", "coffee", 1.5, 0, OLIVE);
link("peanut", "beef", 2, 0, GRAY);
link("peanut", "walnut", 1.5, 0, GRAY);
link("walnut", "p11", 1);
link("walnut", "n10", 1);
link("peanutbutter", "yeast", 1, 0, CATS.PL.edge);
link("peanutbutter", "chickenbroth", 1.5, 0, OLIVE);
link("hazelnut", "roastedhazelnut", 1.5, 0, "#a9a9a9");
link("pecan", "roastedpecan", 1.5, 0, "#a9a9a9");

// meats
mesh("pork bacon chicken m8 m9 m10 beef roastedbeef rawbeef chickenbroth", 2);
link("chicken", "pork", 3);
link("chicken", "bacon", 3);
link("chicken", "roastedbeef", 3);
link("m11", "pork", 1.5);
star("lamb", "m7 beefbroth m6 m1 m2 m3 m4 m5 chicken beef roastedbeef rawbeef", 2);
star("lamb", "sf6 sf7 sf8 sf9 sf10", 3, 0, BLUE);
mesh("sf7 sf8 sf9 sf10 sf6", 1.5);
star("lamb", "c8 pl10 p9 v12 v11 raisin shrimp v13 fenugreek pea", 1.3, 0.02);
link("lamb", "wheatbread", 2, -0.04, CATS.C.edge);
link("lamb", "whitebread", 1.5, -0.05, CATS.C.edge);
link("lamb", "bread", 1.5, -0.06, CATS.C.edge);
link("lamb", "egg", 1.5, 0.12, CATS.AP.edge);
link("lamb", "wheat", 1.2, 0, CATS.C.edge);
link("lamb", "macaroni", 1);
link("lamb", "milkfat", 1);
link("m4", "m5", 1.5);
link("beefbroth", "m4", 2);
star("wheatbread", "c9 whitebread bread sesameoil", 1.2);
link("bread", "whitebread", 1.5);
link("c9", "whitebread", 1);
link("c5", "c4", 1.2);
link("c4", "c3", 1.2);
link("c5", "c6", 1.2);
link("m3", "c6", 1.2);
link("m3", "macaroni", 1.2);
link("m4", "c7", 1.2);
link("p8", "m2", 1.2, 0, OLIVE);
link("coffee", "roastedbeef", 2, 0.15, RED);
link("coffee", "beef", 2, 0.05, RED);
link("coffee", "m12", 1.5, 0, RED);
link("m12", "beef", 2);
link("c10", "beef", 1.2);
link("v19", "beef", 1.2, 0, GREEN);
star("egg", "v15 ap1 v16", 1.2);
link("v15", "a14", 1.2);
link("shallot", "v14", 1.2);

// vegetables
star("soybean", "potato mungbean v22 redbean chickenbroth rawbeef roastedbeef beef", 2, 0, GREEN);
link("potato", "onion", 2.5);
link("potato", "garlic", 2);
link("potato", "v21", 1.2);
mesh("mungbean v22 v23 redbean bean v26 v27", 1.6);
star("bean", "v28 p12 v32 c13 v33", 1.5, 0, GREEN);
link("bean", "garlic", 1.5);
link("v33", "v34", 1.2);
link("v28", "p13", 1.2);
link("onion", "garlic", 2);
link("onion", "leek", 2);
link("onion", "shallot", 2);
link("onion", "cabbage", 1.5);
link("leek", "chive", 2);
link("leek", "shallot", 1.5);
link("leek", "garlic", 1.5);
link("chive", "scallion", 1.5);
star("cabbage", "v29 p14 v30", 1.2, 0, GREEN);
link("garlic", "v31", 1.2);
link("v31", "pl15", 1.2, 0, CATS.PL.edge);
link("beef", "bean", 2.5, 0.12, GREEN);
link("roastedbeef", "bean", 2, 0.1, GREEN);
link("lamb", "onion", 2, 0.1, GREEN);
link("lamb", "bean", 2, 0.18, GREEN);
link("rawbeef", "garlic", 2, 0.05, GREEN);
link("v14", "onion", 1.2);
mesh("mushroom shiitake porcini enokidake matsutake", 4);

// seafoods
mesh("salmon sf13 sf14 tuna sf15 sf16 fish herring haddock sf17 cod", 1.7);
link("caviar", "sturgeon", 1.5);
link("caviar", "salmon", 1.2);
link("sturgeon", "tuna", 1.2);
link("sturgeon", "fish", 1.2);
link("sf13", "sturgeon", 1.2);
link("caviar", "beef", 1.2, 0.05, BLUE);
link("sturgeon", "chickenbroth", 1.2, 0, BLUE);
link("tuna", "beef", 1, 0.04, BLUE);
link("fish", "chickenbroth", 1, 0, BLUE);

const edgePath = (e: EdgeT) => {
  const A = byId[e.a];
  const B = byId[e.b];
  if (!A || !B) return null;
  const mx = (A.x + B.x) / 2;
  const my = (A.y + B.y) / 2;
  const cx = mx - (B.y - A.y) * e.bend;
  const cy = my + (B.x - A.x) * e.bend;
  return `M${A.x} ${A.y}Q${cx.toFixed(1)} ${cy.toFixed(1)} ${B.x} ${B.y}`;
};

const Figure = styled.div`
  margin: 5px 0 0 12px;
  width: 1916px;
  height: 1460px;
  box-sizing: border-box;
  border: 1px solid #e4e4e4;
  border-bottom: none;
`;

const TopRow = styled.div`
  display: flex;
`;

const NetworkSvg = styled.svg`
  display: block;
  flex: none;
  width: 1640px;
  height: 1226px;
`;

const EdgePath = styled.path`
  fill: none;
  stroke-linecap: round;
  opacity: 0.82;
`;

const NodeDot = styled.circle`
  stroke-width: 0.8;
`;

const NodeLabel = styled.text`
  font-family: "Liberation Sans", Arial, Helvetica, sans-serif;
  font-size: 14px;
  fill: #2e2e2e;
  text-anchor: middle;
`;

const Legend = styled.div`
  flex: 1;
  padding: 8px 0 0 13px;
  color: #3a3a3a;
`;

const LegendTitle = styled.div<{ $lh: number; $mt?: number; $indent?: number }>`
  font-weight: bold;
  font-size: 38px;
  color: #141414;
  line-height: ${({ $lh }) => $lh}px;
  margin-top: ${({ $mt }) => $mt ?? 0}px;
  padding-left: ${({ $indent }) => $indent ?? 0}px;
`;

const CatList = styled.div`
  margin-top: -3px;
`;

const CatRow = styled.div`
  display: flex;
  align-items: center;
  gap: 16px;
  height: 45.4px;
  font-size: 22px;
`;

const Swatch = styled.span<{ $fill: string; $stroke: string }>`
  flex: none;
  width: 34px;
  height: 34px;
  border-radius: 50%;
  box-sizing: border-box;
  background: ${({ $fill }) => $fill};
  border: 1.5px solid ${({ $stroke }) => $stroke};
`;

const PrevRow = styled.div<{ $h: number; $mt: number }>`
  display: flex;
  align-items: center;
  height: ${({ $h }) => $h}px;
  margin-top: ${({ $mt }) => $mt}px;
`;

const PrevCell = styled.div`
  flex: none;
  display: flex;
  justify-content: center;
  width: 104px;
  margin-left: 4px;
`;

const PrevDot = styled.span<{ $d: number }>`
  width: ${({ $d }) => $d}px;
  height: ${({ $d }) => $d}px;
  border-radius: 50%;
  box-sizing: border-box;
  background: #b7b7b3;
  border: 1px solid #a2a29e;
`;

const PrevLabel = styled.span<{ $size: number; $gap: number }>`
  font-size: ${({ $size }) => $size}px;
  margin-left: ${({ $gap }) => $gap}px;
`;

const LinkRow = styled.div<{ $mt?: number }>`
  display: flex;
  align-items: center;
  height: 34.5px;
  margin-top: ${({ $mt }) => $mt ?? 0}px;
  padding-left: 6px;
`;

const LinkLine = styled.span<{ $w: number; $c: string }>`
  width: 69px;
  height: ${({ $w }) => $w}px;
  background: ${({ $c }) => $c};
`;

const LinkLabel = styled.span`
  width: 40px;
  margin-left: 14px;
  text-align: center;
  font-size: 19px;
`;

const Caption = styled.p`
  margin: 14.5px 0 0;
  padding: 0 3px 0 21px;
  font-size: 26.6px;
  line-height: 40.25px;
  color: #1c1c1c;
`;

const Ref = styled.sup`
  margin-left: 2px;
  color: #1b5ca8;
  font-size: 0.76em;
  line-height: 0;
`;

const NoBreak = styled.span`
  white-space: nowrap;
`;

const PREVALENCE = [
  { d: 104, h: 104, mt: 1.7, label: "50 %", size: 25, gap: 12 },
  { d: 69, h: 69, mt: 2.5, label: "30 %", size: 19, gap: 9 },
  { d: 34, h: 34, mt: 6.5, label: "10 %", size: 19, gap: 9 },
  { d: 20, h: 20, mt: 5, label: "1 %", size: 19, gap: 9 },
];

const LINK_WIDTHS = [
  { w: 6, c: "#8a8a86", label: "150" },
  { w: 3, c: "#9b9b97", label: "50" },
  { w: 2, c: "#d0d0cc", label: "10" },
];

function FlavorNetwork() {
  return (
    <NetworkSvg viewBox="10.55 4.87 1331.17 995.1">
      <g>
        {EDGES.map((e, i) => {
          const d = edgePath(e);
          if (!d) return null;
          return <EdgePath key={i} d={d} stroke={e.color ?? CATS[byId[e.b].cat].edge} strokeWidth={e.w} />;
        })}
      </g>
      <g>
        {NODES.map(([id]) => {
          const n = byId[id];
          return <NodeDot key={id} cx={n.x} cy={n.y} r={n.r} fill={CATS[n.cat].fill} stroke={CATS[n.cat].stroke} />;
        })}
      </g>
      <g>
        {NODES.filter((n) => n[5]).map(([id]) => {
          const n = byId[id];
          return (
            <NodeLabel key={id} x={n.x + n.dx} y={n.y + n.dy}>
              {n.label}
            </NodeLabel>
          );
        })}
      </g>
    </NetworkSvg>
  );
}

function NetworkLegend() {
  return (
    <Legend>
      <LegendTitle $lh={44}>Categories</LegendTitle>
      <CatList>
        {LEGEND_ORDER.map((c) => (
          <CatRow key={c}>
            <Swatch $fill={CATS[c].fill} $stroke={CATS[c].stroke} />
            {CATS[c].name}
          </CatRow>
        ))}
      </CatList>
      <LegendTitle $lh={44} $mt={9.8} $indent={6}>
        Prevalence
      </LegendTitle>
      {PREVALENCE.map((p) => (
        <PrevRow key={p.label} $h={p.h} $mt={p.mt}>
          <PrevCell>
            <PrevDot $d={p.d} />
          </PrevCell>
          <PrevLabel $size={p.size} $gap={p.gap}>
            {p.label}
          </PrevLabel>
        </PrevRow>
      ))}
      <LegendTitle $lh={47} $mt={32.3}>
        Shared compounds
      </LegendTitle>
      {LINK_WIDTHS.map((l, i) => (
        <LinkRow key={l.label} $mt={i === 0 ? -2 : 0}>
          <LinkLine $w={l.w} $c={l.c} />
          <LinkLabel>{l.label}</LinkLabel>
        </LinkRow>
      ))}
    </Legend>
  );
}

export default function App() {
  return (
    <>
      <GlobalStyle />
      <Figure>
        <TopRow>
          <FlavorNetwork />
          <NetworkLegend />
        </TopRow>
        <Caption>
          Each node denotes an ingredient, the node color indicates food category, and node size reflects the
          ingredient prevalence in recipes. Two ingredients are connected if they share a significant number of flavor
          compounds, link thickness representing the number of shared compounds between the two ingredients. Adjacent
          links are bundled to reduce the clutter. Note that the map shows only the statistically significant links, as
          identified by the algorithm of Refs.<Ref>28, 29</Ref> for{" "}
          <NoBreak>
            <i>p</i>-value
          </NoBreak>{" "}
          0.04. A drawing of the full network is too dense to be informative. We use, however, the full network in our
          subsequent measurements.
        </Caption>
      </Figure>
    </>
  );
}
